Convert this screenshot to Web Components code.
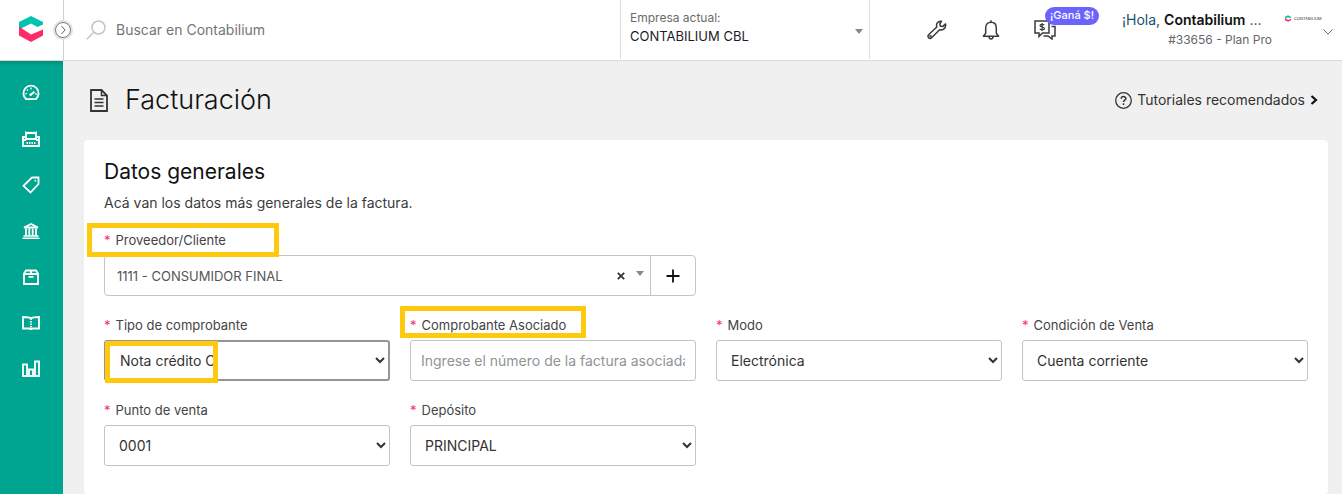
<!DOCTYPE html>
<html lang="es">
<head>
<meta charset="utf-8">
<meta name="viewport" content="width=device-width, initial-scale=1">
<title>Facturación</title>
<style>
  body {
    margin: 0;
    background: #f0f0f0;
    color: #3c3c3c;
    font-family: Inter, "Liberation Sans", sans-serif;
    font-size: 14px;
    line-height: 20px;
    --teal: #00a591;
    --line: #c4c4c4;
    --mark: #ffc90e;
  }
</style>
</head>
<body>
<app-shell>
  <app-header slot="header"></app-header>
  <side-nav slot="nav"></side-nav>
  <page-heading>Facturación</page-heading>
  <form-card heading="Datos generales" intro="Acá van los datos más generales de la factura.">
    <client-field label="Proveedor/Cliente" value="1111 - CONSUMIDOR FINAL" class="wide"></client-field>
    <form-field label="Tipo de comprobante" value="Nota crédito C" active mark="control"></form-field>
    <form-field label="Comprobante Asociado" type="text" placeholder="Ingrese el número de la factura asociada" mark="label"></form-field>
    <form-field label="Modo" value="Electrónica"></form-field>
    <form-field label="Condición de Venta" value="Cuenta corriente"></form-field>
    <form-field label="Punto de venta" value="0001"></form-field>
    <form-field label="Depósito" value="PRINCIPAL"></form-field>
  </form-card>
</app-shell>

<script>
const RESET = `
  :host, *, *::before, *::after { box-sizing: border-box; }
  button, select, input { font: inherit; color: inherit; margin: 0; }
  button { border: 0; background: none; padding: 0; cursor: pointer; display: flex; align-items: center; justify-content: center; }
  a { color: inherit; text-decoration: none; }
  svg { display: block; flex: none; }
`;

function define(name, render) {
  customElements.define(name, class extends HTMLElement {
    constructor() {
      super();
      this.attachShadow({ mode: 'open' });
    }
    connectedCallback() {
      if (this.shadowRoot.childNodes.length) return;
      const t = document.createElement('template');
      t.innerHTML = render(this);
      this.shadowRoot.append(t.content.cloneNode(true));
    }
  });
}

const LOGO = `
  <path fill="#00c4ad" d="M12 0 24 6v2.500L18.500 11 12 7.500 0 13.500V6Z"/>
  <path fill="#ff2a68" d="M0 10.500 12 18.500 24 13.500v6L12 26 0 19.500Z"/>`;

define('app-shell', () => `
  <style>${RESET}
    :host { display: grid; grid-template-columns: 63px minmax(0, 1fr); grid-template-rows: auto 1fr; min-height: 100vh; }
    .top { grid-column: 1 / -1; }
    main { padding: 15px 14px 0 21px; display: flex; flex-direction: column; gap: 16px; }
    ::slotted(form-card) { flex: 1; }
  </style>
  <div class="top"><slot name="header"></slot></div>
  <slot name="nav"></slot>
  <main><slot></slot></main>`);

define('app-header', () => `
  <style>${RESET}
    :host { display: flex; height: 61px; background: #fff; border-bottom: 1px solid #d9d9d9; position: relative; z-index: 1; }
    .brand { width: 64px; padding-right: 1px; border-right: 1px solid #d0d0d0; display: flex; align-items: center; justify-content: center; position: relative; }
    .brand a { margin-bottom: 2px; }
    .toggle { position: absolute; right: -8px; top: 22px; width: 16px; height: 16px; border: 1px solid #7d7d7d; border-radius: 50%; background: #fff; box-shadow: 0 0 0 2px #e2e2e2; }
    .search { flex: 1; display: flex; align-items: center; gap: 10px; padding-left: 22px; min-width: 0; }
    .search input { flex: 1; min-width: 0; border: 0; outline: 0; padding: 0; background: none; }
    .search input::placeholder { color: #757575; opacity: 1; }
    .company { width: 250px; margin-bottom: 1px; border: solid #dcdcdc; border-width: 0 1px; padding: 9px 6px 0 9px; position: relative; }
    .company label { display: block; font-size: 12px; line-height: 18px; color: #6b6b6b; }
    .company select { appearance: none; border: 0; background: none; padding: 0; width: 100%; font-size: 13px; line-height: 18px; height: 18px; color: #1c1c2c; display: block; }
    .company svg { position: absolute; right: 6px; top: 29px; pointer-events: none; }
    .tools { display: flex; align-items: center; gap: 32px; padding-left: 56px; width: 252px; }
    .tools button { width: 22px; height: 22px; color: #3a3a3a; position: relative; }
    .badge { position: absolute; left: 11px; top: -12px; height: 18px; padding: 0 5px; border-radius: 9px; background: #6c63ff; color: #fff; font-size: 11px; line-height: 17px; font-weight: 500; white-space: nowrap; }
    .account { display: flex; padding-top: 10px; width: 220px; }
    .who { width: 150px; }
    .who div { white-space: nowrap; font-size: 14px; color: #1b4f6e; }
    .who b { font-weight: 600; color: #111; }
    .who .plan { text-align: right; font-size: 12px; color: #666; }
    .mini { margin-left: 13px; width: 48px; }
    .mini div { display: flex; align-items: center; gap: 3px; height: 17px; font-size: 4px; line-height: 8px; color: #333; }
    .mini button { width: 10px; margin: 2px 0 0 38px; }
  </style>
  <div class="brand">
    <a href="#" aria-label="Contabilium"><svg width="24" height="26" viewBox="0 0 24 26">${LOGO}</svg></a>
    <button class="toggle" aria-label="Expandir menú"><svg width="8" height="10" viewBox="0 0 8 10" fill="none" stroke="#666"><path d="M2.500 1 6 5 2.500 9"/></svg></button>
  </div>
  <label class="search">
    <svg width="20" height="20" viewBox="0 0 20 20" fill="none" stroke="#c4c4c4" stroke-width="1.500"><circle cx="12.500" cy="7.500" r="6.500"/><path d="M7.500 12.500 .8 19.200"/></svg>
    <input type="search" placeholder="Buscar en Contabilium" aria-label="Buscar en Contabilium">
  </label>
  <div class="company">
    <label for="company">Empresa actual:</label>
    <select id="company"><option>CONTABILIUM CBL</option></select>
    <svg width="8" height="5" viewBox="0 0 8 5"><path fill="#888" d="M0 0h8L4 5z"/></svg>
  </div>
  <div class="tools">
    <button aria-label="Herramientas"><svg width="20" height="20" viewBox="0 0 20 20" fill="none" stroke="currentColor" stroke-width="1.500" stroke-linejoin="round"><path d="M14.500 1.300C12 .8 9.600 2.600 9.500 5.200c0 .7.100 1.300.3 1.800L1.600 14.800a2.100 2.100 0 0 0 0 3c.9.900 2.200.9 3 0l8-8.100c3 .9 6-1.200 6.100-4.400 0-.5-.1-1-.2-1.400l-2.800 2.700-2.400-.5-.5-2.400Z"/><circle cx="3.500" cy="16.300" r=".5"/></svg></button>
    <button aria-label="Notificaciones"><svg width="18" height="20" viewBox="0 0 18 20" fill="none" stroke="currentColor" stroke-width="1.500" stroke-linejoin="round"><path d="M9 2.300c-3.300 0-5.300 2.300-5.300 5.700v5.200L1.400 16.300h15.200l-2.300-3.100V8c0-3.400-2-5.700-5.300-5.700ZM9 .3v2M7 16.500c0 3.200 4 3.200 4 0"/></svg></button>
    <button aria-label="¡Ganá $!"><svg width="22" height="20" viewBox="0 0 22 20" fill="none" stroke="currentColor" stroke-width="1.500"><path d="M1 1h14v12H8.500L5 16.500V13H1Z"/><path d="M17.500 6.500H21v9.500h-3v3l-4-3H9.500"/><path d="M10.300 5C9.500 4 6 4 6 5.600c0 1.900 4.400.9 4.400 2.800 0 1.700-3.600 1.700-4.600.5M8.100 3v8" stroke-width="1.200"/></svg><span class="badge">¡Ganá $!</span></button>
  </div>
  <div class="account">
    <div class="who"><div>¡Hola, <b>Contabilium</b> ...</div><div class="plan">#33656 - Plan Pro</div></div>
    <div class="mini">
      <div><svg width="6" height="7" viewBox="0 0 24 26">${LOGO}</svg>CONTABILIUM</div>
      <button aria-label="Menú de cuenta"><svg width="10" height="6" viewBox="0 0 10 6" fill="none" stroke="#3f7fa8"><path d="M.5.500 5 5 9.500.500"/></svg></button>
    </div>
  </div>`);

const NAV = [
  ['Tablero', '<path d="M4.200 15.200a7.600 7.600 0 1 1 9.600 0Z" stroke-width="1.800"/><path d="m9 10.500 3.500-2.700" stroke-width="2"/><path d="M9 3.500v2M4.800 5.500l1.100 1.100M3.200 9.700h1.600M13.200 10h1.600" stroke-width="1.300"/><circle cx="8.600" cy="10.800" r="1.200" fill="#fff" stroke="none"/>'],
  ['Ventas', '<path d="M4 9V2.500l1.300.8 1.200-.8 1.300.8L9 2.500l1.200.8 1.300-.8 1.200.8 1.300-.8V9Z"/><path d="M4 7H1v9h16V7h-3M1 10h3M14 10h3"/><path d="M4.500 13h9" stroke-dasharray="1.500 1"/>'],
  ['Productos', '<path d="M10 1.500 16.500 1.500V8L8.500 16.500 1.500 9.800Z"/><circle cx="13.300" cy="4.700" r=".9" fill="#fff" stroke="none"/>'],
  ['Bancos', '<path d="M2 5.500 9 2l7 3.500Z"/><path d="M4 6.500V14M7.300 6.500V14M10.700 6.500V14M14 6.500V14" stroke-width="1.800"/><path d="M1.500 14h15M.5 16.300h17" stroke-width="1.500"/>'],
  ['Inventario', '<path d="M2 5.500V16h14V5.500L14 2.500H4Z"/><path d="M2 6h14M9 2.500V6M6.500 8.800h5"/>'],
  ['Contabilidad', '<path d="M9 4.500C7.500 3 4 3 1 3v11.500h6.200c1 0 1.800.5 1.800 1.500 0-1 .8-1.500 1.800-1.500H17V3c-3 0-6.500 0-8 1.500Z"/><path d="M9 4.500V16" stroke-dasharray="1.500 1"/>'],
  ['Reportes', '<path d="M1 4.500h4V16H1ZM7 9.500h4V16H7ZM13 1.500h4V16h-4Z"/>']
];

define('side-nav', () => `
  <style>${RESET}
    :host { display: block; background: linear-gradient(#008f7d, var(--teal) 5px); }
    nav { display: flex; flex-direction: column; align-items: center; gap: 28px; padding: 23px 1px 0 0; }
  </style>
  <nav aria-label="Principal">${NAV.map(([name, art]) => `
    <a href="#" aria-label="${name}"><svg width="18" height="18" viewBox="0 0 18 18" fill="none" stroke="#fff" stroke-width="1.800">${art}</svg></a>`).join('')}
  </nav>`);

define('page-heading', () => `
  <style>${RESET}
    :host { display: flex; align-items: center; justify-content: space-between; height: 48px; padding: 0 10px 0 6px; }
    h1 { display: flex; align-items: center; gap: 17px; margin: 0; font-size: 27px; line-height: 32px; font-weight: 300; color: #111; }
    a { display: flex; align-items: center; gap: 5px; color: #333; }
  </style>
  <h1><svg width="18" height="23" viewBox="0 0 18 23" fill="none" stroke="#333" stroke-width="1.800"><path d="M1 1h10.500L17 6.500V22H1Z"/><path d="M11.500 1v5.500H17M4.500 10h9M4.500 13.500h9M4.500 17h9" stroke-width="1.500"/></svg><span><slot></slot></span></h1>
  <a href="#"><svg width="17" height="17" viewBox="0 0 17 17" fill="none" stroke="#333"><circle cx="8.500" cy="8.500" r="7.800" stroke-width="1.300"/><path d="M6.200 6.800c0-3 4.700-2.800 4.700-.3 0 1.700-2.400 1.600-2.400 3.500M8.500 11.300V13" stroke-width="1.500"/></svg>Tutoriales recomendados<svg width="8" height="10" viewBox="0 0 8 10" fill="none" stroke="#111" stroke-width="2.200"><path d="M1.500 1 6 5 1.500 9"/></svg></a>`);

define('form-card', el => `
  <style>${RESET}
    :host { display: block; background: #fff; border-radius: 4px; padding: 20px; }
    h2 { margin: 0; font-size: 21px; line-height: 24px; font-weight: 400; color: #111; }
    p { margin: 9px 0 17px; }
    form { display: grid; grid-template-columns: repeat(4, minmax(0, 1fr)); gap: 19px 20px; }
    ::slotted(.wide) { grid-column: 1 / 3; }
    ::slotted(form-field:nth-of-type(1)) { grid-column: 1; }
  </style>
  <h2>${el.getAttribute('heading')}</h2>
  <p>${el.getAttribute('intro')}</p>
  <form><slot></slot></form>`);

const FIELD = `${RESET}
  :host { display: block; min-width: 0; }
  label { display: inline-block; margin-bottom: 5px; font-size: 13px; line-height: 20px; color: #444; position: relative; vertical-align: top; }
  i { font-style: normal; color: #f0356e; margin-right: 5px; }
  .mark { position: absolute; border: 5px solid var(--mark); pointer-events: none; z-index: 1; }
`;

define('form-field', el => {
  const a = n => el.getAttribute(n);
  const mark = '<span class="mark"></span>';
  const control = a('type') === 'text'
    ? `<input id="control" type="text" placeholder="${a('placeholder')}">`
    : `<select id="control"><option>${a('value')}</option></select>`;
  return `
  <style>${FIELD}
    .box { position: relative; }
    input, select { display: block; width: 100%; height: 41px; border: 1px solid var(--line); border-radius: 3px; background: #fff; padding: 0 10px; outline: 0; color: #333; }
    input::placeholder { color: #8e9499; opacity: 1; }
    :host([active]) select { border: 2px solid #959595; }
    label .mark { inset: -9px -20px -3px -10px; }
    .box .mark { left: 1px; top: 1px; width: 113px; height: 42px; }
  </style>
  <label for="control"><i>*</i>${a('label')}${a('mark') === 'label' ? mark : ''}</label>
  <div class="box">${control}${a('mark') === 'control' ? mark : ''}</div>`;
});

define('client-field', el => `
  <style>${FIELD}
    .box { display: flex; height: 41px; border: 1px solid var(--line); border-radius: 4px; }
    select { appearance: none; flex: 1; min-width: 0; border: 0; outline: 0; background: none; padding: 0 12px; font-size: 13px; color: #555; }
    .clear { width: 20px; }
    .caret { align-self: center; margin: 0 6px 4px 5px; }
    .add { width: 45px; border-left: 1px solid var(--line); }
    .mark { inset: -7px -53px -7px -17px; }
  </style>
  <label for="control"><i>*</i>${el.getAttribute('label')}<span class="mark"></span></label>
  <div class="box">
    <select id="control"><option>${el.getAttribute('value')}</option></select>
    <button type="button" class="clear" aria-label="Quitar"><svg width="8" height="8" viewBox="0 0 8 8" stroke="#333" stroke-width="1.800"><path d="m.8.800 6.400 6.400M7.200.800.8 7.200"/></svg></button>
    <svg class="caret" width="8" height="5" viewBox="0 0 8 5"><path fill="#888" d="M0 0h8L4 5z"/></svg>
    <button type="button" class="add" aria-label="Agregar"><svg width="14" height="14" viewBox="0 0 14 14" stroke="#111" stroke-width="1.800"><path d="M7 .5v13M.5 7h13"/></svg></button>
  </div>`);
</script>
</body>
</html>
